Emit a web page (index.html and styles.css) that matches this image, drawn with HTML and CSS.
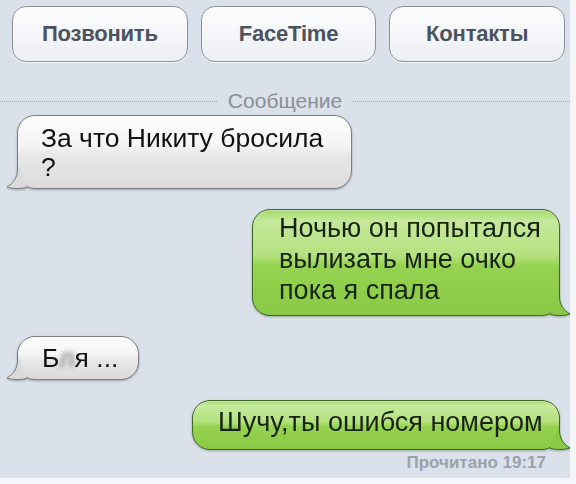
FILE: index.html
```html
<!DOCTYPE html>
<html lang="ru">
<head>
<meta charset="utf-8">
<link rel="stylesheet" href="styles.css">
</head>
<body>
<div class="screen">
  <div class="buttons">
    <div class="btn">Позвонить</div>
    <div class="btn">FaceTime</div>
    <div class="btn">Контакты</div>
  </div>
  <div class="sep">
    <span class="dots"></span>
    <span class="sep-text">Сообщение</span>
    <span class="dots"></span>
  </div>
  <div class="thread">
    <div class="bubble in b1">За что Никиту бросила<br>?<svg class="tail" viewBox="0 0 36 26" width="36" height="26"><path d="M12.5,0 L12.5,6 C12.5,14 9,20 2,24 C8,26 16,26 22,24.3"/></svg></div>
    <div class="bubble out b2">Ночью он попытался<br>вылизать мне очко<br>пока я спала<svg class="tail" viewBox="0 0 36 26" width="36" height="26"><path d="M12.5,0 L12.5,6 C12.5,14 9,20 2,24 C8,26 16,26 22,24.3"/></svg></div>
    <div class="bubble in b3">Б<span class="blot">л</span>я ...<svg class="tail" viewBox="0 0 36 26" width="36" height="26"><path d="M12.5,0 L12.5,6 C12.5,14 9,20 2,24 C8,26 16,26 22,24.3"/></svg></div>
    <div class="bubble out b4">Шучу,ты ошибся номером<svg class="tail" viewBox="0 0 36 26" width="36" height="26"><path d="M12.5,0 L12.5,6 C12.5,14 9,20 2,24 C8,26 16,26 22,24.3"/></svg></div>
    <div class="read">Прочитано 19:17</div>
  </div>
</div>
</body>
</html>
```

FILE: styles.css
```css
* { box-sizing: border-box; }
html, body { margin: 0; padding: 0; }
body {
  background: #f3f5f8;
  font-family: "Liberation Sans", Arial, sans-serif;
}
.screen {
  width: 570px;
  height: 478px;
  background: #dbe1ea;
  overflow: hidden;
}
.buttons {
  display: flex;
  gap: 13px;
  padding: 6px 5px 0 12px;
}
.btn {
  flex: 1;
  height: 56px;
  border: 1px solid #8c929b;
  border-radius: 14px;
  background: linear-gradient(#fdfdfe 0%, #f3f5f8 60%, #eceff3 100%);
  box-shadow: 0 1px 0 rgba(255,255,255,0.7), inset 0 1px 0 #ffffff;
  display: flex;
  align-items: center;
  justify-content: center;
  font-weight: bold;
  font-size: 22px;
  color: #4b5360;
  letter-spacing: -0.2px;
}
.sep {
  margin-top: 28px;
  height: 22px;
  display: flex;
  align-items: center;
  gap: 11px;
}
.dots {
  flex: 1;
  border-top: 1px dotted #a3a9b2;
  margin-top: 1px;
}
.sep-text {
  font-size: 21px;
  color: #8a8f98;
  line-height: 22px;
}
.thread {
  display: flex;
  flex-direction: column;
  margin-top: 3px;
}
.bubble {
  position: relative;
  font-size: 26.5px;
  line-height: 29px;
  border: 1px solid #7e7e7e;
  border-radius: 18px;
  filter: drop-shadow(0 1px 1px rgba(0,0,0,0.28));
}
.bubble .tail {
  position: absolute;
  bottom: -1px;
  overflow: visible;
}
.bubble .tail path {
  stroke-width: 1;
}
.in {
  align-self: flex-start;
  margin-left: 17px;
  color: #111;
  background: linear-gradient(#fefefe 0%, #f4f4f4 42%, #e8e8e8 54%, #dbdbdb 100%);
  box-shadow: inset 0 1px 0 #ffffff;
}
.in .tail { left: -13px; }
.in .tail path { fill: #dbdbdb; stroke: #7e7e7e; }
.out {
  align-self: flex-end;
  margin-right: 10px;
  color: #17230f;
  border-color: #3d6b22;
  background: linear-gradient(#a6da6b 0%, #c4e99b 10%, #b4e17f 44%, #95d350 53%, #89c945 100%);
  box-shadow: inset 0 1px 0 rgba(255,255,255,0.35);
  font-size: 27px;
}
.out .tail { right: -13px; transform: scaleX(-1); }
.out .tail path { fill: #89c945; stroke: #3d6b22; }
.b1 {
  margin-top: 0;
  width: 335px;
  height: 74px;
  padding: 8px 10px 0 23px;
}
.b2 {
  margin-top: 20px;
  width: 308px;
  height: 107px;
  padding: 3px 6px 0 26px;
  line-height: 31px;
}
.b3 {
  margin-top: 20px;
  width: 122px;
  height: 44px;
  padding: 7px 6px 0 24px;
}
.blot {
  color: transparent;
  text-shadow: 0 0 5px rgba(80,80,80,0.75);
}
.b4 {
  margin-top: 20px;
  width: 368px;
  height: 50px;
  padding: 7px 6px 0 25px;
}
.read {
  align-self: flex-end;
  margin-right: 24px;
  margin-top: 3px;
  font-size: 17px;
  line-height: 20px;
  font-weight: bold;
  color: #9aa1ab;
}
```
